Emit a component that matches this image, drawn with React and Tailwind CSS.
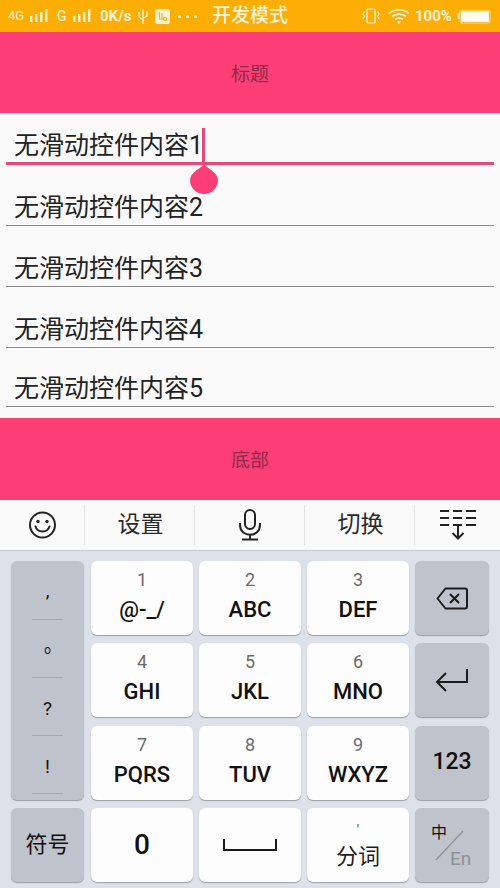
import React from 'react';

const font = { cjk: 'font-["Roboto","Noto_Sans_CJK_SC",sans-serif]' };

const fields = [
  { text: '无滑动控件内容2', h: 'h-[61px]' },
  { text: '无滑动控件内容3', h: 'h-[61px]' },
  { text: '无滑动控件内容4', h: 'h-[61px]' },
  { text: '无滑动控件内容5', h: 'h-[59px]' },
];

const Signal = () => (
  <svg width="20" height="14" viewBox="0 0 20 14" fill="#fdf0cf">
    <rect x="1" y="7" width="2.4" height="6" />
    <rect x="6" y="5" width="2.4" height="8" />
    <rect x="11" y="3" width="2.4" height="10" />
    <rect x="16" y="0" width="2.4" height="13" />
  </svg>
);

const StatusBar = () => (
  <div className="h-8 bg-[#fdae05] flex items-center pl-2 pr-[9px] text-[#fdf3dc] shrink-0">
    <span className="text-[13px] w-[21px]">4G</span>
    <Signal />
    <span className="text-[14px] ml-[8px] w-[12px]">G</span>
    <span className="ml-[3px]"><Signal /></span>
    <span className="text-[15px] font-bold ml-[8px] w-[31px] whitespace-nowrap">0K/s</span>
    <svg className="ml-[6px]" width="12" height="17" viewBox="0 0 12 17" fill="none" stroke="#fdf3dc" strokeWidth="1.3">
      <path d="M6 1v15M6 12L2 9V6M6 10l4-2V5" />
      <rect x="1" y="4" width="2" height="2" fill="#fdf3dc" stroke="none" />
      <circle cx="10" cy="4" r="1" fill="#fdf3dc" stroke="none" />
    </svg>
    <span className="ml-[6px] w-[15px] h-[15px] rounded-[2px] bg-[#fdf3dc] flex items-center justify-center">
      <svg width="11" height="11" viewBox="0 0 11 11" fill="none" stroke="#fdae05" strokeWidth="1.2">
        <path d="M2 1l1 8M5 2v7" />
        <circle cx="8" cy="8" r="1.6" />
      </svg>
    </span>
    <span className="ml-[8px] flex gap-[5px]">
      <i className="w-[3px] h-[3px] rounded-full bg-[#fdf3dc]" />
      <i className="w-[3px] h-[3px] rounded-full bg-[#fdf3dc]" />
      <i className="w-[3px] h-[3px] rounded-full bg-[#fdf3dc]" />
    </span>
    <span className={`ml-[15px] text-[19px] font-medium whitespace-nowrap ${font.cjk}`}>开发模式</span>
    <svg className="ml-[74px]" width="18" height="16" viewBox="0 0 18 16" fill="none" stroke="#fdf3dc" strokeWidth="1.2">
      <rect x="5" y="1" width="8" height="14" rx="1" />
      <path d="M2.5 3.5L1 6l1.5 2.5L1 11M15.5 3.5L17 6l-1.5 2.5L17 11" />
    </svg>
    <svg className="ml-[8px]" width="22" height="16" viewBox="0 0 22 16" fill="none" stroke="#fdf3dc" strokeWidth="1.7">
      <path d="M1 5.5c5.5-5 14.500-5 20 0M4 8.500c3.800-3.300 10.200-3.300 14 0M7 11.500c2.200-1.800 5.800-1.800 8 0" />
      <path d="M9 13.700c1.200-.9 2.800-.9 4 0L11 16z" fill="#fdf3dc" stroke="none" />
    </svg>
    <span className="ml-[5px] text-[15px] font-bold w-[37px]">100%</span>
    <svg className="ml-[5px]" width="34" height="15" viewBox="0 0 34 15">
      <rect x="0.500" y="4" width="2" height="6" fill="#fdf3dc" />
      <rect x="3" y="1" width="30" height="13" rx="2" fill="none" stroke="#fdd98a" />
      <rect x="4" y="2" width="28" height="11" rx="1" fill="#fffaf0" />
    </svg>
  </div>
);

const Bar = ({ label, className }) => (
  <div className={`shrink-0 bg-[#fd3e76] flex items-center justify-center text-[19px] text-[#8f2a4a] ${font.cjk} ${className}`}>
    {label}
  </div>
);

const Content = () => (
  <div className={`relative h-[305px] bg-[#fafafa] px-[6px] text-[#222] text-[25px] leading-none shrink-0 ${font.cjk}`}>
    <div className="h-[52px] border-b-[3px] border-[#e8487a] pl-2 flex items-end pb-[4px]">
      <span>无滑动控件内容1</span>
    </div>
    {fields.map((f) => (
      <div key={f.text} className={`${f.h} border-b border-[#8c8c8c] pl-2 flex items-end pb-[5px]`}>
        <span>{f.text}</span>
      </div>
    ))}
    {/* cursor + selection handle */}
    <div className="absolute left-[202px] top-[15px] w-[3px] h-[36px] bg-[#e8487a]" />
    <svg className="absolute left-[189px] top-[50px]" width="30" height="32" viewBox="0 0 30 32">
      <path d="M15 1C17 5 29 9 29 17a14 14 0 0 1-28 0C1 9 13 5 15 1z" fill="#fd3e76" />
    </svg>
  </div>
);

const Divider = () => <div className="w-px h-10 bg-[#e3e3e3]" />;

const Toolbar = () => (
  <div className={`h-[51px] shrink-0 bg-[#fafafa] border-b border-[#c8cbd0] flex items-center text-[23px] text-[#2a2a2a] ${font.cjk}`}>
    <div className="w-[84px] flex justify-center pl-[1px]">
      <svg width="30" height="30" viewBox="0 0 30 30" fill="none" stroke="#222" strokeWidth="2">
        <circle cx="14.500" cy="15" r="12.500" />
        <path d="M7.500 16.500c2 6.500 12 6.500 14 0" strokeLinecap="round" />
        <circle cx="10" cy="11.500" r="1.700" fill="#222" stroke="none" />
        <circle cx="19" cy="11.500" r="1.700" fill="#222" stroke="none" />
      </svg>
    </div>
    <Divider />
    <div className="w-[109px] text-center pl-[2px]">设置</div>
    <Divider />
    <div className="w-[109px] flex justify-center">
      <svg width="26" height="32" viewBox="0 0 26 32" fill="none" stroke="#222" strokeWidth="2">
        <rect x="8" y="1" width="10" height="19" rx="5" />
        <path d="M3 14v2c0 13 20 13 20 0v-2M13 25v5M5 30.500h16" />
      </svg>
    </div>
    <Divider />
    <div className="w-[109px] text-center pl-[2px]">切换</div>
    <Divider />
    <div className="flex-1 flex justify-center">
      <svg width="38" height="32" viewBox="0 0 38 32" fill="none" stroke="#222" strokeWidth="2">
        <path d="M1 2h9M14 2h9M27 2h10M1 9h9M14 9h9M27 9h10M1 16h9M14 16h9M27 16h10" />
        <path d="M19 16v13M13.500 24l5.500 5.500 5.500-5.500" />
      </svg>
    </div>
  </div>
);

const NumKey = ({ num, letters, className }) => (
  <div className={`bg-[#fdfdfd] rounded-[6px] shadow-[0_1px_1px_#9a9da3] flex flex-col items-center ${className || ''}`}>
    <span className="text-[18px] leading-none text-[#6b6b6b] mt-[10px]">{num}</span>
    <span className="text-[22px] leading-none font-medium text-[#111] mt-[10px]">{letters}</span>
  </div>
);

const Gray = ({ children, className }) => (
  <div className={`bg-[#bfc3cb] rounded-[6px] shadow-[0_1px_1px_#9a9da3] flex items-center justify-center ${className || ''}`}>
    {children}
  </div>
);

const puncts = [
  { c: ',', h: 'h-[58px]', cls: 'pt-[1px]' },
  { c: '。', h: 'h-[57px]', cls: 'pt-[2px] font-["Noto_Sans_CJK_TC",sans-serif]' },
  { c: '?', h: 'h-[57px]', cls: 'pt-[3px]' },
  { c: '!', h: 'h-[57px]', cls: 'pt-[3px]' },
];

const Keyboard = () => (
  <div className={`flex-1 bg-[#dde1e9] px-[11px] pt-[10px] ${font.cjk}`}>
    <div className="grid grid-cols-[74px_102px_102px_102px_74px] grid-rows-[74px_74px_74px_74px] gap-x-[6px] gap-y-[8.300px] text-[#111]">
      <Gray className="row-span-3 w-[73px] flex-col !justify-start text-[19px]">
        {puncts.map((p, i) => (
          <div key={p.c} className="contents">
            {i > 0 && <div className="w-[31px] h-px bg-[#a4a8b0]" />}
            <div className={`${p.h} ${p.cls} flex items-center justify-center leading-none`}>{p.c}</div>
          </div>
        ))}
        <div className="w-[31px] h-px bg-[#a4a8b0]" />
      </Gray>
      <NumKey num="1" letters="@-_/" />
      <NumKey num="2" letters="ABC" />
      <NumKey num="3" letters="DEF" />
      <Gray>
        <svg width="32" height="23" viewBox="0 0 32 23" fill="none" stroke="#1c1c1c" strokeWidth="2">
          <path d="M9.500 1.500H29a2 2 0 0 1 2 2v16a2 2 0 0 1-2 2H9.500L1.500 11.500z" strokeLinejoin="round" />
          <path d="M14 7l9 9M23 7l-9 9" />
        </svg>
      </Gray>
      <NumKey num="4" letters="GHI" />
      <NumKey num="5" letters="JKL" />
      <NumKey num="6" letters="MNO" />
      <Gray>
        <svg width="34" height="26" viewBox="0 0 34 26" fill="none" stroke="#1c1c1c" strokeWidth="2">
          <path d="M32 2v13H2M11 6l-9 9 9 9" />
        </svg>
      </Gray>
      <NumKey num="7" letters="PQRS" />
      <NumKey num="8" letters="TUV" />
      <NumKey num="9" letters="WXYZ" />
      <Gray className="text-[23px] font-medium">123</Gray>
      <Gray className="w-[73px] text-[22px]">符号</Gray>
      <div className="bg-[#fdfdfd] rounded-[6px] shadow-[0_1px_1px_#9a9da3] flex items-center justify-center text-[28px] font-medium">0</div>
      <div className="bg-[#fdfdfd] rounded-[6px] shadow-[0_1px_1px_#9a9da3] flex items-center justify-center">
        <svg width="54" height="14" viewBox="0 0 54 14" fill="none" stroke="#1a1a1a" strokeWidth="2">
          <path d="M1 1v11h52V1" />
        </svg>
      </div>
      <div className="bg-[#fdfdfd] rounded-[6px] shadow-[0_1px_1px_#9a9da3] flex flex-col items-center">
        <span className="text-[14px] leading-none text-[#555] mt-[15px]">'</span>
        <span className="text-[22px] leading-none text-[#1f1f1f] mt-[9px]">分词</span>
      </div>
      <Gray className="relative">
        <span className="absolute left-[16px] top-[17px] text-[16px] leading-none text-[#111]">中</span>
        <svg className="absolute left-[20px] top-[22px]" width="30" height="32" viewBox="0 0 30 32" stroke="#8e9198" strokeWidth="1.200">
          <path d="M1 30L28 1" />
        </svg>
        <span className="absolute left-[35px] top-[41px] text-[19px] leading-none text-[#8e9198]">En</span>
      </Gray>
    </div>
  </div>
);

export default function App() {
  return (
    <div className="w-[500px] h-[888px] flex flex-col overflow-hidden font-['Roboto',sans-serif]">
      <StatusBar />
      <Bar label="标题" className="h-[81px] pt-[5px]" />
      <Content />
      <Bar label="底部" className="h-[82px] pt-[4px]" />
      <Toolbar />
      <Keyboard />
    </div>
  );
}
